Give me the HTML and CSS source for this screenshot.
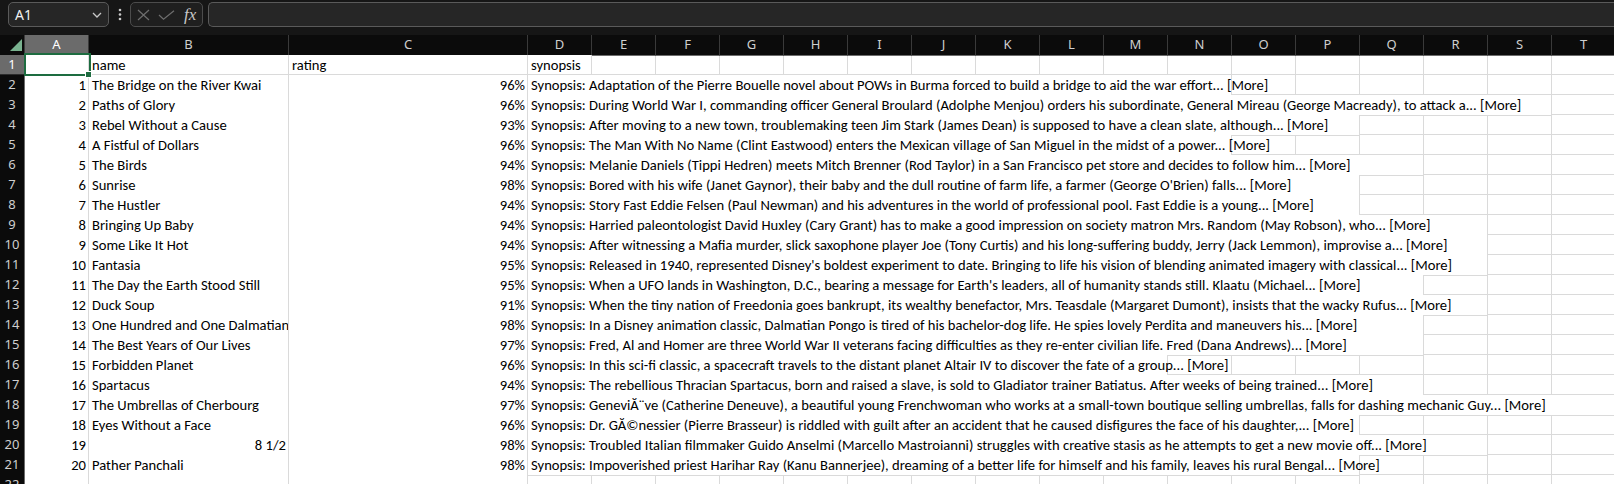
FILE: index.html
```html
<!DOCTYPE html>
<html>
<head>
<meta charset="utf-8">
<link rel="stylesheet" href="styles.css">
</head>
<body>
<div class="toolbar">
  <div class="namebox"><span class="ref">A1</span>
    <svg class="chev" width="10" height="6" viewBox="0 0 10 6"><polyline points="1,1 5,5 9,1" fill="none" stroke="#c8c8c8" stroke-width="1.3"/></svg>
  </div>
  <svg class="dots" width="4" height="14" viewBox="0 0 4 14"><circle cx="2" cy="2" r="1.3" fill="#c8c8c8"/><circle cx="2" cy="6.5" r="1.3" fill="#c8c8c8"/><circle cx="2" cy="11" r="1.3" fill="#c8c8c8"/></svg>
  <div class="fxbox">
    <svg width="13" height="12" viewBox="0 0 13 12"><path d="M1 1 L12 11 M12 1 L1 11" stroke="#6e6e6e" stroke-width="1.2" fill="none"/></svg>
    <svg width="17" height="10" viewBox="0 0 17 10"><path d="M1 5 L5.5 9.2 L16 0.8" stroke="#6e6e6e" stroke-width="1.2" fill="none"/></svg>
    <span class="fx">fx</span>
  </div>
  <div class="formula"></div>
</div>
<div class="sheet">
  <div class="row head">
    <div class="corner"><svg width="25" height="20" viewBox="0 0 25 20"><polygon points="10,16 22,4 22,16" fill="#79b28f"/></svg></div>
    <div class="ch sel">A</div><div class="ch">B</div><div class="ch">C</div><div class="ch">D</div><div class="ch">E</div><div class="ch">F</div><div class="ch">G</div><div class="ch">H</div><div class="ch">I</div><div class="ch">J</div><div class="ch">K</div><div class="ch">L</div><div class="ch">M</div><div class="ch">N</div><div class="ch">O</div><div class="ch">P</div><div class="ch">Q</div><div class="ch">R</div><div class="ch">S</div><div class="ch">T</div>
  </div>
  <div class="row"><div class="rh sel">1</div><div class="c active"><span class="handle"></span></div><div class="c">name</div><div class="c">rating</div><div class="c">synopsis</div></div>
  <div class="row"><div class="rh">2</div><div class="c n">1</div><div class="c">The Bridge on the River Kwai</div><div class="c n">96%</div><div class="c syn s11">Synopsis: Adaptation of the Pierre Bouelle novel about POWs in Burma forced to build a bridge to aid the war effort... [More]</div></div>
  <div class="row"><div class="rh">3</div><div class="c n">2</div><div class="c">Paths of Glory</div><div class="c n">96%</div><div class="c syn s16">Synopsis: During World War I, commanding officer General Broulard (Adolphe Menjou) orders his subordinate, General Mireau (George Macready), to attack a... [More]</div></div>
  <div class="row"><div class="rh">4</div><div class="c n">3</div><div class="c">Rebel Without a Cause</div><div class="c n">93%</div><div class="c syn s13">Synopsis: After moving to a new town, troublemaking teen Jim Stark (James Dean) is supposed to have a clean slate, although... [More]</div></div>
  <div class="row"><div class="rh">5</div><div class="c n">4</div><div class="c">A Fistful of Dollars</div><div class="c n">96%</div><div class="c syn s11">Synopsis: The Man With No Name (Clint Eastwood) enters the Mexican village of San Miguel in the midst of a power... [More]</div></div>
  <div class="row"><div class="rh">6</div><div class="c n">5</div><div class="c">The Birds</div><div class="c n">94%</div><div class="c syn s14">Synopsis: Melanie Daniels (Tippi Hedren) meets Mitch Brenner (Rod Taylor) in a San Francisco pet store and decides to follow him... [More]</div></div>
  <div class="row"><div class="rh">7</div><div class="c n">6</div><div class="c">Sunrise</div><div class="c n">98%</div><div class="c syn s13">Synopsis: Bored with his wife (Janet Gaynor), their baby and the dull routine of farm life, a farmer (George O'Brien) falls... [More]</div></div>
  <div class="row"><div class="rh">8</div><div class="c n">7</div><div class="c">The Hustler</div><div class="c n">94%</div><div class="c syn s13">Synopsis: Story Fast Eddie Felsen (Paul Newman) and his adventures in the world of professional pool. Fast Eddie is a young... [More]</div></div>
  <div class="row"><div class="rh">9</div><div class="c n">8</div><div class="c">Bringing Up Baby</div><div class="c n">94%</div><div class="c syn s15">Synopsis: Harried paleontologist David Huxley (Cary Grant) has to make a good impression on society matron Mrs. Random (May Robson), who... [More]</div></div>
  <div class="row"><div class="rh">10</div><div class="c n">9</div><div class="c">Some Like It Hot</div><div class="c n">94%</div><div class="c syn s15">Synopsis: After witnessing a Mafia murder, slick saxophone player Joe (Tony Curtis) and his long-suffering buddy, Jerry (Jack Lemmon), improvise a... [More]</div></div>
  <div class="row"><div class="rh">11</div><div class="c n">10</div><div class="c">Fantasia</div><div class="c n">95%</div><div class="c syn s15">Synopsis: Released in 1940, represented Disney's boldest experiment to date. Bringing to life his vision of blending animated imagery with classical... [More]</div></div>
  <div class="row"><div class="rh">12</div><div class="c n">11</div><div class="c">The Day the Earth Stood Still</div><div class="c n">95%</div><div class="c syn s14">Synopsis: When a UFO lands in Washington, D.C., bearing a message for Earth's leaders, all of humanity stands still. Klaatu (Michael... [More]</div></div>
  <div class="row"><div class="rh">13</div><div class="c n">12</div><div class="c">Duck Soup</div><div class="c n">91%</div><div class="c syn s15">Synopsis: When the tiny nation of Freedonia goes bankrupt, its wealthy benefactor, Mrs. Teasdale (Margaret Dumont), insists that the wacky Rufus... [More]</div></div>
  <div class="row"><div class="rh">14</div><div class="c n">13</div><div class="c">One Hundred and One Dalmatians</div><div class="c n">98%</div><div class="c syn s14">Synopsis: In a Disney animation classic, Dalmatian Pongo is tired of his bachelor-dog life. He spies lovely Perdita and maneuvers his... [More]</div></div>
  <div class="row"><div class="rh">15</div><div class="c n">14</div><div class="c">The Best Years of Our Lives</div><div class="c n">97%</div><div class="c syn s14">Synopsis: Fred, Al and Homer are three World War II veterans facing difficulties as they re-enter civilian life. Fred (Dana Andrews)... [More]</div></div>
  <div class="row"><div class="rh">16</div><div class="c n">15</div><div class="c">Forbidden Planet</div><div class="c n">96%</div><div class="c syn s10">Synopsis: In this sci-fi classic, a spacecraft travels to the distant planet Altair IV to discover the fate of a group... [More]</div></div>
  <div class="row"><div class="rh">17</div><div class="c n">16</div><div class="c">Spartacus</div><div class="c n">94%</div><div class="c syn s14">Synopsis: The rebellious Thracian Spartacus, born and raised a slave, is sold to Gladiator trainer Batiatus. After weeks of being trained... [More]</div></div>
  <div class="row"><div class="rh">18</div><div class="c n">17</div><div class="c">The Umbrellas of Cherbourg</div><div class="c n">97%</div><div class="c syn s17">Synopsis: GeneviĂ¨ve (Catherine Deneuve), a beautiful young Frenchwoman who works at a small-town boutique selling umbrellas, falls for dashing mechanic Guy... [More]</div></div>
  <div class="row"><div class="rh">19</div><div class="c n">18</div><div class="c">Eyes Without a Face</div><div class="c n">96%</div><div class="c syn s13">Synopsis: Dr. GĂ©nessier (Pierre Brasseur) is riddled with guilt after an accident that he caused disfigures the face of his daughter,... [More]</div></div>
  <div class="row"><div class="rh">20</div><div class="c n">19</div><div class="c n">8 1/2</div><div class="c n">98%</div><div class="c syn s15">Synopsis: Troubled Italian filmmaker Guido Anselmi (Marcello Mastroianni) struggles with creative stasis as he attempts to get a new movie off... [More]</div></div>
  <div class="row"><div class="rh">21</div><div class="c n">20</div><div class="c">Pather Panchali</div><div class="c n">98%</div><div class="c syn s13">Synopsis: Impoverished priest Harihar Ray (Kanu Bannerjee), dreaming of a better life for himself and his family, leaves his rural Bengal... [More]</div></div>
  <div class="row"><div class="rh">22</div><div class="c"></div><div class="c"></div><div class="c"></div></div>
</div>
</body>
</html>
```
FILE: styles.css
```css
html, body {
  margin: 0;
  padding: 0;
  width: 1614px;
  height: 484px;
  overflow: hidden;
  background: #ffffff;
}

.toolbar {
  height: 35px;
  background: #161616;
  display: flex;
  align-items: flex-start;
  padding-top: 2px;
  box-sizing: border-box;
  font-family: "Noto Sans", "Open Sans", sans-serif;
}

.namebox {
  margin-left: 8px;
  width: 101px;
  height: 25px;
  box-sizing: border-box;
  border: 1px solid #5a5a5a;
  border-radius: 5px;
  background: #262626;
  display: flex;
  align-items: center;
  justify-content: space-between;
  padding: 0 6px 0 6px;
}

.ref {
  color: #f0f0f0;
  font-size: 14px;
}

.chev {
  margin-top: 1px;
}

.dots {
  margin: 6px 8px 0 9px;
}

.fxbox {
  width: 73px;
  height: 25px;
  box-sizing: border-box;
  border: 1px solid #4c4c4c;
  border-radius: 5px;
  background: #1f1f1f;
  display: flex;
  align-items: center;
  gap: 8px;
  padding-left: 6px;
}

.fx {
  font-family: "Liberation Serif", serif;
  font-style: italic;
  color: #c8c8c8;
  font-size: 17px;
  margin-left: 1px;
}

.formula {
  margin-left: 5px;
  flex: 1;
  height: 25px;
  box-sizing: border-box;
  border: 1px solid #5a5a5a;
  border-right: none;
  border-radius: 5px 0 0 5px;
  background: #262626;
}

.sheet {
  font-family: Carlito, Calibri, "Liberation Sans Narrow", "Liberation Sans", sans-serif;
  font-size: 14.6px;
  color: #000;
}

.row {
  display: grid;
  grid-template-columns: 25px 64px 200px 239px repeat(17, 64px);
  height: 20px;
  background-color: #fff;
  background-image:
    linear-gradient(to top, #dadada 1px, transparent 1px),
    repeating-linear-gradient(to right, transparent 0 63px, #dadada 63px 64px);
  background-position: 0 0, 528px 0;
}

.row.head {
  background: #0b0b0b;
  font-family: "Noto Sans", "Open Sans", sans-serif;
  font-size: 13px;
  color: #cfcfcf;
}

.corner {
  border-right: 1px solid #3a3a3a;
  border-bottom: 1px solid #6c6c6c;
  box-sizing: border-box;
}

.corner svg {
  display: block;
}

.ch {
  border-right: 1px solid #3a3a3a;
  border-bottom: 1px solid #6c6c6c;
  box-sizing: border-box;
  text-align: center;
  line-height: 19px;
}

.ch.sel {
  background: #6b6b6b;
  color: #ffffff;
}

.rh {
  background: #0b0b0b;
  color: #cfcfcf;
  font-family: "Noto Sans", "Open Sans", sans-serif;
  font-size: 13px;
  text-align: center;
  line-height: 19px;
  border-right: 1px solid #6c6c6c;
  border-bottom: 1px solid #2c2c2c;
  box-sizing: border-box;
}

.rh.sel {
  background: #6b6b6b;
  color: #ffffff;
}

.c {
  background: #fff;
  border-right: 1px solid #dadada;
  border-bottom: 1px solid #dadada;
  box-sizing: border-box;
  white-space: nowrap;
  overflow: hidden;
  line-height: 20px;
  padding: 0 3px;
}

.c.n {
  text-align: right;
  padding-right: 2px;
}

.c.active {
  position: relative;
  overflow: visible;
  z-index: 2;
}

.c.active::before {
  content: "";
  position: absolute;
  left: -1px;
  top: -2px;
  right: -3px;
  bottom: -2px;
  border: 2px solid #1d6c40;
}

.handle {
  position: absolute;
  right: -4px;
  bottom: -4px;
  width: 5px;
  height: 5px;
  background: #1d6c40;
  border: 1px solid #fff;
}

.syn { overflow: visible; }
.s10 { grid-column: 5 / span 10; }
.s11 { grid-column: 5 / span 11; }
.s12 { grid-column: 5 / span 12; }
.s13 { grid-column: 5 / span 13; }
.s14 { grid-column: 5 / span 14; }
.s15 { grid-column: 5 / span 15; }
.s16 { grid-column: 5 / span 16; }
.s17 { grid-column: 5 / span 17; }
```
